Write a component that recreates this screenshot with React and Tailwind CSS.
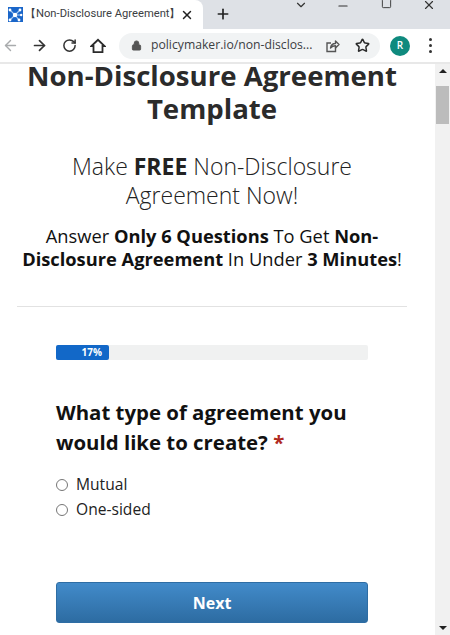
import React from "react";
import { ArrowLeft, ArrowRight, RotateCw, Lock, Star, X, Plus, ChevronDown, Minus, Square } from "lucide-react";

function Favicon() {
  return (
    <svg width="15" height="15" viewBox="0 0 15 15" className="-mt-[1px]">
      <rect width="15" height="15" fill="#1a66c9" />
      <path d="M2 3L7 8L2 13M7 8L12 3M7 8L13 8M7 8L11 13" stroke="#a9ccf3" strokeWidth="1.2" fill="none" />
      <circle cx="7" cy="8" r="2.2" fill="#fff" />
      <circle cx="2" cy="3" r="1.4" fill="#fff" />
      <circle cx="12" cy="3" r="1.4" fill="#fff" />
      <circle cx="2" cy="13" r="1.4" fill="#fff" />
      <circle cx="11" cy="13" r="1.4" fill="#fff" />
      <circle cx="13.2" cy="8" r="1.2" fill="#fff" />
    </svg>
  );
}

function HomeIcon() {
  return (
    <svg width="16" height="16" viewBox="0 0 16 16" className="ml-[13px]" fill="none" stroke="#2b2b2b" strokeWidth="1.8">
      <path d="M1.5 8L8 1.8L14.5 8H12.5V14.2H3.5V8Z" strokeLinejoin="miter" />
    </svg>
  );
}

function ShareIcon() {
  return (
    <svg width="14" height="14" viewBox="0 0 14 14" fill="none" stroke="#555" strokeWidth="1.4">
      <path d="M9.5 8.5V12.5H1V4H5" />
      <path d="M4.5 9C5 6 7 4.5 9.5 4.5V2L13 5.5L9.5 9V6.8C7.5 6.8 5.8 7.5 4.5 9Z" strokeLinejoin="round" />
    </svg>
  );
}

function Radio({ label }) {
  return (
    <label className="flex items-center h-[25px] text-[15.6px] text-[#222]">
      <span className="w-[12px] h-[12px] rounded-full border border-[#767676] bg-white mr-[8px]" />
      {label}
    </label>
  );
}

export default function App() {
  return (
    <div className="w-[450px] h-[635px] overflow-hidden flex flex-col bg-white font-['Open_Sans',sans-serif]">
      {/* tab strip */}
      <div className="h-[29px] shrink-0 bg-[#dee1e6] flex items-start relative">
        <div className="w-[203px] h-[29px] bg-white rounded-tr-[8px] flex items-center pl-[8px] pr-[8px]">
          <Favicon />
          <span className="ml-[2px] w-[155px] overflow-hidden whitespace-nowrap text-[11.2px] text-[#3c4043] font-['Roboto',sans-serif]">【Non-Disclosure Agreement】</span>
          <X size={14} strokeWidth={2.5} className="text-[#222]" />
        </div>
        <Plus size={16} strokeWidth={2.5} className="ml-[12px] mt-[6px] text-[#222]" />
        <div className="ml-auto flex items-start text-[#333] -mt-[3px]">
          <ChevronDown size={14} className="mr-[28px] mt-[1px]" />
          <Minus size={14} className="mr-[31px] mt-[2px]" />
          <Square size={11} className="mr-[30px] mt-[1px]" />
          <X size={14} className="mr-[14px] mt-[1px]" />
        </div>
      </div>

      {/* toolbar */}
      <div className="h-[33px] shrink-0 bg-white flex items-center text-[#333]">
        <ArrowLeft size={17} className="ml-[2px] text-[#a9abad]" />
        <ArrowRight size={17} strokeWidth={2.4} className="ml-[12px]" />
        <RotateCw size={15} strokeWidth={2.4} className="ml-[14px]" />
        <HomeIcon />
        <div className="ml-[13px] w-[261px] h-[26px] rounded-full bg-[#f1f3f4] flex items-center pl-[12px]">
          <Lock size={11} fill="#555" className="text-[#555]" />
          <span className="ml-[9px] w-[164px] text-[12.2px] text-[#3c4043] whitespace-nowrap">policymaker.io/non-disclos...</span>
          <span className="ml-[11px]"><ShareIcon /></span>
          <Star size={15} strokeWidth={2.4} className="ml-[15px] text-[#2b2b2b]" />
        </div>
        <div className="ml-[10px] w-[20px] h-[20px] rounded-full bg-[#0f8a7e] text-white text-[10px] font-semibold flex items-center justify-center">R</div>
        <div className="ml-[19px] flex flex-col gap-[3px]">
          <span className="w-[3px] h-[3px] rounded-full bg-[#333]" />
          <span className="w-[3px] h-[3px] rounded-full bg-[#333]" />
          <span className="w-[3px] h-[3px] rounded-full bg-[#333]" />
        </div>
      </div>

      <div className="h-[2px] shrink-0 bg-[#e8e8e8]" />

      {/* page */}
      <div className="flex-1 flex min-h-0">
        <div className="flex-1 overflow-hidden">
          <div className="w-[424px] px-[17px] text-center">
            <h1 className="text-[27.6px] leading-[33px] font-bold text-[#2b2b2b] -mt-[5px]">Non-Disclosure Agreement<br />Template</h1>
            <p className="mt-[27px] text-[23px] leading-[29px] font-light text-[#222]">
              Make <strong className="font-bold">FREE</strong> Non-Disclosure<br />Agreement Now!
            </p>
            <p className="mt-[14px] -mx-[2px] text-[18.3px] leading-[23px] text-[#111]">
              Answer <strong className="font-bold">Only 6 Questions</strong> To Get <strong className="font-bold">Non-<br />Disclosure Agreement</strong> In Under <strong className="font-bold">3 Minutes</strong>!
            </p>
            <hr className="mt-[36px] border-[#e2e2e2]" />
          </div>

          <div className="w-[312px] ml-[56px]">
            <div className="mt-[38px] h-[15px] rounded-[2px] bg-[#f0f1f1]">
              <div className="w-[53px] h-full rounded-[2px] bg-[#1268c8] text-white text-[10px] font-bold leading-[15px] text-right pr-[7px]">17%</div>
            </div>
            <h2 className="mt-[37px] text-[20.4px] leading-[30px] font-bold text-[#111]">
              What type of agreement you<br />would like to create? <span className="text-[#b02a1e]">*</span>
            </h2>
            <div className="mt-[15px]">
              <Radio label="Mutual" />
              <Radio label="One-sided" />
            </div>
            <button className="mt-[60px] w-full h-[41px] rounded-[3px] border border-[#2e6da4] bg-gradient-to-b from-[#428bca] to-[#2d6ca2] text-white text-[16px] font-bold">Next</button>
          </div>
        </div>

        {/* scrollbar */}
        <div className="w-[15px] shrink-0 bg-[#f1f1f1] flex flex-col items-center relative">
          <div className="mt-[5px] w-0 h-0 border-x-[4px] border-x-transparent border-b-[4px] border-b-[#222]" />
          <div className="mt-[13px] w-[13px] h-[38px] bg-[#bcbcbc]" />
          <div className="mt-auto mb-[5px] w-0 h-0 border-x-[4px] border-x-transparent border-t-[4px] border-t-[#222]" />
        </div>
      </div>
    </div>
  );
}
